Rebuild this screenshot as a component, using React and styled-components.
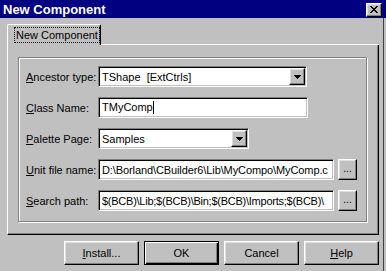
import React from "react";
import styled, { createGlobalStyle } from "styled-components";

const Global = createGlobalStyle`
  html, body { margin: 0; padding: 0; background: #c0c0c0; }
  body { font-family: "Liberation Sans", Arial, sans-serif; font-size: 11px; }
`;

const Window = styled.div`
  width: 386px;
  height: 271px;
  background: #c0c0c0;
  display: flex;
  flex-direction: column;
  overflow: hidden;
  color: #000;
  font-family: "Liberation Sans", Arial, sans-serif;
  font-size: 11px;
`;

const TitleBar = styled.div`
  height: 18px;
  flex: none;
  background: #000080;
  display: flex;
  align-items: center;
  justify-content: space-between;
  padding: 0 4px 0 3px;
  color: #fff;
  font-weight: bold;
  font-size: 13px;
`;

const Raised = `
  background: #c0c0c0;
  border: 1px solid;
  border-color: #fff #000 #000 #fff;
  box-shadow: inset -1px -1px 0 #808080, inset 1px 1px 0 #dfdfdf;
  box-sizing: border-box;
`;

const CloseBtn = styled.div`
  ${Raised}
  width: 16px;
  height: 14px;
  display: flex;
  align-items: center;
  justify-content: center;
  margin-top: 1px;
`;

const Body = styled.div`
  flex: 1;
  display: flex;
  flex-direction: column;
  padding: 6px 4px 0 7px;
  margin-right: 2px;
  border-right: 1px solid #404040;
`;

const TabStrip = styled.div`
  display: flex;
  height: 21px;
`;

const Tab = styled.div`
  width: 94px;
  box-sizing: border-box;
  border-left: 1px solid #fff;
  border-top: 1px solid #fff;
  border-right: 1px solid #000;
  border-top-left-radius: 2px;
  border-top-right-radius: 2px;
  box-shadow: inset -1px 0 0 #808080;
  padding: 2px 0 0 6px;
`;

const TabLabel = styled.span`
  display: inline-block;
  line-height: 14px;
  border: 1px dotted #000;
  padding: 0 1px;
`;

const TabFiller = styled.div`
  flex: 1;
  border-bottom: 1px solid #fff;
`;

const Page = styled.div`
  height: 190px;
  box-sizing: border-box;
  border-left: 1px solid #fff;
  border-right: 1px solid #000;
  border-bottom: 1px solid #000;
  box-shadow: inset -1px -1px 0 #808080;
  padding: 12px 11px 12px 10px;
`;

const Group = styled.div`
  border: 1px solid #808080;
  box-shadow: inset 1px 1px 0 #fff, 1px 1px 0 #fff;
  padding: 8px 7px 10px 7px;
  display: flex;
  flex-direction: column;
  gap: 10px;
`;

const Row = styled.div`
  display: flex;
  align-items: center;
  height: 21px;
`;

const Label = styled.div`
  width: 72px;
  flex: none;
  white-space: nowrap;
`;

const Key = styled.span`
  text-decoration: underline;
`;

const Field = styled.div`
  width: ${(p) => p.$w}px;
  height: 21px;
  box-sizing: border-box;
  background: #fff;
  border: 1px solid;
  border-color: #808080 #fff #fff #808080;
  box-shadow: inset 1px 1px 0 #000, inset -1px -1px 0 #c0c0c0;
  display: flex;
  align-items: center;
  padding: 0 2px 0 3px;
  overflow: hidden;
`;

const FieldText = styled.span`
  flex: 1;
  white-space: pre;
  overflow: hidden;
  letter-spacing: ${(p) => p.$ls || 0}px;
`;

const Caret = styled.span`
  display: inline-block;
  width: 1px;
  height: 13px;
  background: #000;
  vertical-align: middle;
`;

const DropBtn = styled.div`
  ${Raised}
  width: 16px;
  height: 17px;
  flex: none;
  display: flex;
  align-items: center;
  justify-content: center;
  margin-right: -1px;
`;

const Browse = styled.div`
  ${Raised}
  width: 19px;
  height: 21px;
  margin-left: 4px;
  display: flex;
  align-items: flex-end;
  justify-content: center;
  padding-bottom: 5px;
  font-size: 10px;
  line-height: 1;
`;

const Buttons = styled.div`
  display: flex;
  justify-content: flex-end;
  gap: 5px;
  margin-top: 6px;
`;

const Button = styled.div`
  ${Raised}
  width: 75px;
  height: 24px;
  display: flex;
  align-items: center;
  justify-content: center;
  ${(p) =>
    p.$default &&
    `
    border-color: #000;
    box-shadow: inset 1px 1px 0 #fff, inset -1px -1px 0 #000, inset -2px -2px 0 #808080;
  `}
`;

const Arrow = () => (
  <svg width="7" height="4" viewBox="0 0 7 4" shapeRendering="crispEdges">
    <rect x="0" y="0" width="7" height="1" fill="#000" />
    <rect x="1" y="1" width="5" height="1" fill="#000" />
    <rect x="2" y="2" width="3" height="1" fill="#000" />
    <rect x="3" y="3" width="1" height="1" fill="#000" />
  </svg>
);

const CloseGlyph = () => {
  const rows = [
    [0, 6],
    [1, 5],
    [2, 4],
    [3, 3],
    [2, 4],
    [1, 5],
    [0, 6],
  ];
  return (
    <svg width="8" height="7" viewBox="0 0 8 7" shapeRendering="crispEdges">
      {rows.map(([a, b], i) => (
        <g key={i}>
          <rect x={a} y={i} width="2" height="1" fill="#000" />
          <rect x={b} y={i} width="2" height="1" fill="#000" />
        </g>
      ))}
    </svg>
  );
};

const Combo = ({ w, text }) => (
  <Field $w={w}>
    <FieldText>{text}</FieldText>
    <DropBtn>
      <Arrow />
    </DropBtn>
  </Field>
);

export default function App() {
  return (
    <>
      <Global />
      <Window>
        <TitleBar>
          <span>New Component</span>
          <CloseBtn>
            <CloseGlyph />
          </CloseBtn>
        </TitleBar>
        <Body>
          <TabStrip>
            <Tab>
              <TabLabel>New Component</TabLabel>
            </Tab>
            <TabFiller />
          </TabStrip>
          <Page>
            <Group>
              <Row>
                <Label>
                  <Key>A</Key>ncestor type:
                </Label>
                <Combo w={209} text="TShape  [ExtCtrls]" />
              </Row>
              <Row>
                <Label>
                  <Key>C</Key>lass Name:
                </Label>
                <Field $w={210}>
                  <FieldText>
                    TMyComp
                    <Caret />
                  </FieldText>
                </Field>
              </Row>
              <Row>
                <Label>
                  <Key>P</Key>alette Page:
                </Label>
                <Combo w={151} text="Samples" />
              </Row>
              <Row>
                <Label>
                  <Key>U</Key>nit file name:
                </Label>
                <Field $w={236}>
                  <FieldText $ls={-0.1}>D:\Borland\CBuilder6\Lib\MyCompo\MyComp.c</FieldText>
                </Field>
                <Browse>...</Browse>
              </Row>
              <Row>
                <Label>
                  <Key>S</Key>earch path:
                </Label>
                <Field $w={236}>
                  <FieldText $ls={-0.25}>$(BCB)\Lib;$(BCB)\Bin;$(BCB)\Imports;$(BCB)\</FieldText>
                </Field>
                <Browse>...</Browse>
              </Row>
            </Group>
          </Page>
          <Buttons>
            <Button>
              <span>
                <Key>I</Key>nstall...
              </span>
            </Button>
            <Button $default>OK</Button>
            <Button>Cancel</Button>
            <Button>
              <span>
                <Key>H</Key>elp
              </span>
            </Button>
          </Buttons>
        </Body>
      </Window>
    </>
  );
}
